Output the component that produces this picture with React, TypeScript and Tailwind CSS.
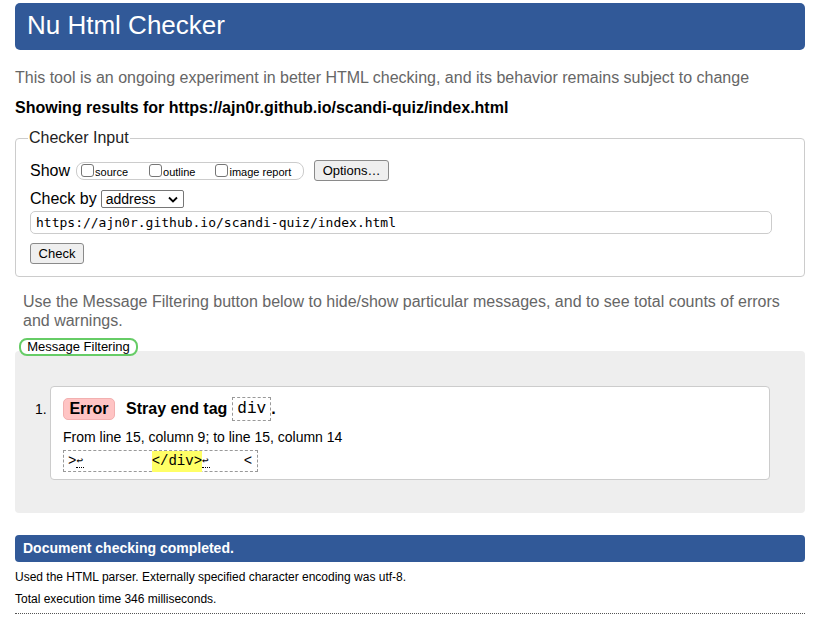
import React from "react";

function Checkbox() {
  return <span className="inline-block w-[13px] h-[13px] border border-[#767676] rounded-[3px] bg-white shrink-0" />;
}

export default function App() {
  const sans = "font-['Liberation_Sans',Arial,sans-serif]";
  return (
    <div className={`${sans} bg-white min-h-[641px] w-[822px] px-[15px] pt-[3px] text-black`}>
      <div className="w-[790px]">
        {/* header */}
        <div className="h-[47px] bg-[#315998] rounded-[5px] flex items-center pl-[12px] pb-[4px]">
          <h1 className="text-white text-[26px] leading-[30px] font-normal">Nu Html Checker</h1>
        </div>

        <p className="mt-[19px] text-[16px] leading-[18px] text-[#666]">
          This tool is an ongoing experiment in better HTML checking, and its behavior remains subject to change
        </p>
        <p className="mt-[12px] text-[16px] leading-[18px] font-bold">
          Showing results for https://ajn0r.github.io/scandi-quiz/index.html
        </p>

        {/* fieldset */}
        <fieldset className="mt-[12px] border border-[#ccc] rounded-[4px] px-[14px] pb-[12px]">
          <legend className="ml-[-2px] px-[1px] text-[16px] leading-[18px] text-[#222]">Checker Input</legend>
          <div className="mt-[13px] h-[21px] flex items-center">
            <span className="text-[16px] leading-[18px]">Show</span>
            <div className="ml-[6px] h-[18px] w-[228px] border border-[#ccc] rounded-[8px] flex items-center pl-[4px] text-[11px] leading-[12px]">
              <Checkbox />
              <span className="ml-[1px] mt-[2px]">source</span>
              <span className="ml-[21px] flex items-center">
                <Checkbox />
                <span className="ml-[1px] mt-[2px]">outline</span>
              </span>
              <span className="ml-[20px] flex items-center">
                <Checkbox />
                <span className="ml-[1px] mt-[2px]">image report</span>
              </span>
            </div>
            <div className="ml-[10px] h-[21px] w-[75px] border border-[#8a8a8a] rounded-[3px] bg-[#efefef] flex items-center justify-center text-[13px]">
              Options…
            </div>
          </div>
          <div className="mt-[9px] h-[18px] flex items-center">
            <span className="text-[16px] leading-[18px]">Check by</span>
            <div className="ml-[4px] h-[18px] w-[83px] border border-[#767676] rounded-[2px] bg-white flex items-center pl-[4px] pr-[4px] text-[14px] leading-[16px]">
              <span className="flex-1">address</span>
              <svg width="10" height="7" viewBox="0 0 10 7" className="mr-[1px]">
                <path d="M1 1.5 L5 5.5 L9 1.5" fill="none" stroke="#000" strokeWidth="1.8" />
              </svg>
            </div>
          </div>
          <div className="mt-[3px] h-[23px] w-[742px] border border-[#ccc] rounded-[5px] flex items-center pl-[5px] text-[13px] font-['DejaVu_Sans_Mono',monospace]">
            https://ajn0r.github.io/scandi-quiz/index.html
          </div>
          <div className="mt-[9px] h-[21px] w-[54px] border border-[#8a8a8a] rounded-[3px] bg-[#efefef] flex items-center justify-center text-[13px]">
            Check
          </div>
        </fieldset>

        <p className="mt-[15px] mx-[8px] text-[16px] leading-[19px] text-[#666]">
          Use the Message Filtering button below to hide/show particular messages, and to see total counts of errors and warnings.
        </p>

        <div className="relative z-10 mt-[8px] mb-[-5px] ml-[4px] h-[18px] w-[119px] border-2 border-[#66cc66] rounded-[8px] bg-white flex items-center justify-center text-[13px] leading-[14px]">
          Message Filtering
        </div>

        {/* results box */}
        <div className="bg-[#eeeeee] rounded-[4px] h-[162px] pt-[35px] pl-[20px] flex">
          <span className="w-[15px] mt-[15px] text-[14px] leading-[16px]">1.</span>
          <div className="w-[720px] h-[94px] bg-white border border-[#ccc] rounded-[4px] pl-[12px] pt-[10px]">
            <div className="h-[24px] flex items-center">
              <span className="h-[22px] w-[52px] bg-[#ffc4c4] border border-[#f2b0b0] rounded-[5px] flex items-center justify-center text-[16px] font-bold">
                Error
              </span>
              <span className="ml-[11px] text-[16px] font-bold">Stray end tag</span>
              <span className="ml-[5px] h-[24px] px-[4px] border border-dashed border-[#999] flex items-center text-[16px] font-['Liberation_Mono',monospace]">
                div
              </span>
              <span className="text-[16px] font-bold">.</span>
            </div>
            <p className="mt-[8px] text-[14px] leading-[16px]">From line 15, column 9; to line 15, column 14</p>
            <div className="mt-[5px] h-[22px] w-[195px] border border-dashed border-[#999] flex items-center pl-[4px] text-[14px] font-['Liberation_Mono',monospace] whitespace-pre">
              <span>&gt;</span>
              <span className="inline-block w-[8px] text-[11px] leading-[12px] border-b border-dotted border-black">↩</span>
              <span>{"        "}</span>
              <span className="bg-[#ffff66]">&lt;/div&gt;</span>
              <span className="inline-block w-[8px] text-[11px] leading-[12px] border-b border-dotted border-black">↩</span>
              <span>{"    "}</span>
              <span>&lt;</span>
            </div>
          </div>
        </div>

        {/* footer */}
        <div className="mt-[22px] h-[27px] bg-[#315998] rounded-[4px] flex items-center pl-[8px]">
          <span className="text-white text-[14px] font-bold">Document checking completed.</span>
        </div>
        <p className="mt-[8px] text-[12px] leading-[14px]">
          Used the HTML parser. Externally specified character encoding was utf-8.
        </p>
        <p className="mt-[8px] text-[12px] leading-[14px]">Total execution time 346 milliseconds.</p>
        <div className="mt-[7px] border-t border-dotted border-[#555]" />
      </div>
    </div>
  );
}
